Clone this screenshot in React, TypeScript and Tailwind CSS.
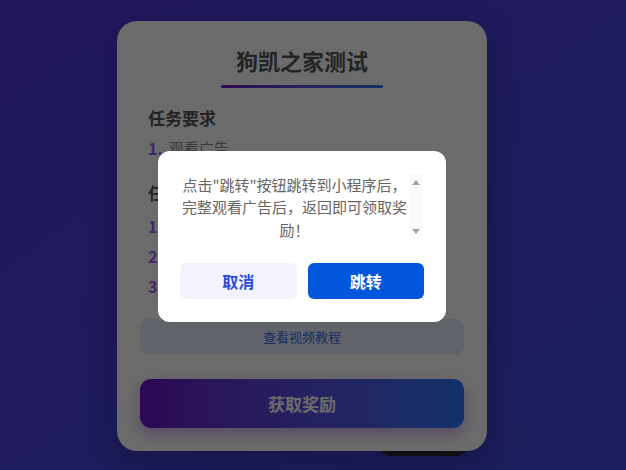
export default function App() {
  return (
    <div className="relative h-[470px] w-full overflow-hidden bg-gradient-to-br from-[#5036e0] to-[#3f48dc] font-['Noto_Sans_CJK_SC','Noto_Sans',sans-serif]">
      <div className="absolute left-[377px] top-[430px] h-[26px] w-[93px] rounded-b-[14px] bg-[#2a2a3a]" />
      <div className="flex justify-center pr-[22px] pt-[21px]">
        <div className="relative flex h-[430px] w-[370px] flex-col rounded-[20px] bg-white px-[23px] pt-[24px] shadow-[0_10px_30px_rgba(0,0,0,0.25)]">
          <h1 className="text-center text-[22px] font-bold leading-[30px] text-[#555]">狗凯之家测试</h1>
          <div className="mx-auto mt-[10px] h-[3px] w-[162px] rounded-full bg-gradient-to-r from-[#6a11cb] to-[#2575fc]" />

          <div className="mt-[18px] pl-[8px]">
            <h2 className="text-[17px] font-bold leading-[24px] text-[#555]">任务要求</h2>
            <div className="mt-[6px] flex items-center gap-[6px] leading-[24px]">
              <span className="text-[16px] font-bold text-[#9f5cf0]">1.</span>
              <span className="text-[15px] text-[#888]">观看广告</span>
            </div>
          </div>

          <div className="mt-[21px] pl-[8px]">
            <h2 className="text-[17px] font-bold leading-[24px] text-[#555]">任务步骤</h2>
            <div className="mt-[9px] flex flex-col gap-[6px]">
              <div className="flex items-center gap-[6px] leading-[24px]">
                <span className="text-[16px] font-bold text-[#9f5cf0]">1</span>
                <span className="text-[15px] text-[#888]">点击下方获取奖励按钮</span>
              </div>
              <div className="flex items-center gap-[6px] leading-[24px]">
                <span className="text-[16px] font-bold text-[#9f5cf0]">2</span>
                <span className="text-[15px] text-[#888]">跳转小程序观看广告</span>
              </div>
              <div className="flex items-center gap-[6px] leading-[24px]">
                <span className="text-[16px] font-bold text-[#9f5cf0]">3</span>
                <span className="text-[15px] text-[#888]">返回即可领取奖励</span>
              </div>
            </div>
          </div>

          <button className="mt-[21px] flex h-[35px] w-full items-center justify-center rounded-[8px] bg-[#e5ebfa] text-[13px] text-[#3b6cf0]">
            查看视频教程
          </button>
          <button className="mt-[25px] flex h-[49px] w-full items-center justify-center rounded-[11px] bg-gradient-to-r from-[#6a11cb] to-[#2575fc] text-[17px] font-bold text-white shadow-[0_6px_16px_rgba(106,17,203,0.35)]">
            获取奖励
          </button>
        </div>
      </div>

      <div className="fixed inset-0 flex items-center justify-center bg-black/[0.58] pr-[22px] pt-[2px]">
        <div className="w-[288px] rounded-[12px] bg-white px-[22px] py-[23px]">
          <div className="flex h-[66px]">
            <div className="w-[229px] overflow-hidden text-center text-[15px] leading-[22.5px] text-[#666]">
              点击"跳转"按钮跳转到小程序后，完整观看广告后，返回即可领取奖励！
            </div>
            <div className="flex w-[14px] flex-col items-center justify-between bg-[#fafafa] py-[6px]">
              <svg width="8" height="5" viewBox="0 0 8 5">
                <path d="M0 5 L4 0 L8 5 Z" fill="#a3a3a3" />
              </svg>
              <svg width="8" height="5" viewBox="0 0 8 5">
                <path d="M0 0 L8 0 L4 5 Z" fill="#a3a3a3" />
              </svg>
            </div>
          </div>
          <div className="mt-[23px] flex gap-[11px]">
            <button className="flex h-[36px] flex-1 items-center justify-center rounded-[6px] bg-[#f3f3fe] text-[16px] font-bold text-[#2c4ddc]">
              取消
            </button>
            <button className="flex h-[36px] flex-1 items-center justify-center rounded-[6px] bg-[#0256dc] text-[16px] font-bold text-white">
              跳转
            </button>
          </div>
        </div>
      </div>
    </div>
  );
}
